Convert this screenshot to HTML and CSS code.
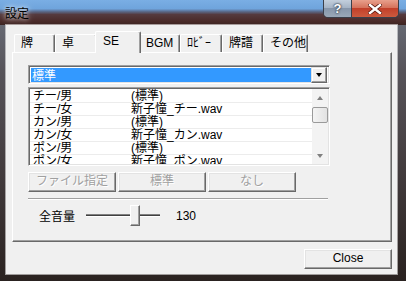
FILE: index.html
```html
<!DOCTYPE html>
<html lang="ja">
<head>
  <meta charset="UTF-8">
  <title>設定</title>
  <link rel="stylesheet" href="styles.css">
</head>
<body>
  <div class="window">
    <div class="titlebar">
      <span class="title">設定</span>
      <div class="caption">
        <div class="cap help">?</div>
        <div class="cap close">
          <svg width="14" height="10" viewBox="0 0 14 10">
            <path d="M2 1 L12 9 M12 1 L2 9" stroke="#5a1a10" stroke-width="4" stroke-linecap="square"/>
            <path d="M2 1 L12 9 M12 1 L2 9" stroke="#fff" stroke-width="2.4" stroke-linecap="square"/>
          </svg>
        </div>
      </div>
    </div>

    <div class="client">
      <div class="tabs">
        <div class="tab w41">牌</div>
        <div class="tab">卓</div>
        <div class="tab active">SE</div>
        <div class="tab w41">BGM</div>
        <div class="tab">ﾛﾋﾞｰ</div>
        <div class="tab w41">牌譜</div>
        <div class="tab w45">その他</div>
      </div>

      <div class="panel">
        <div class="combo">
          <div class="combo-value">標準</div>
          <div class="combo-arrow"><span class="tri-down"></span></div>
        </div>

        <div class="list">
          <div class="rows">
            <div class="row"><span class="c1">チー/男</span><span>(標準)</span></div>
            <div class="row"><span class="c1">チー/女</span><span>新子憧_チー.wav</span></div>
            <div class="row"><span class="c1">カン/男</span><span>(標準)</span></div>
            <div class="row"><span class="c1">カン/女</span><span>新子憧_カン.wav</span></div>
            <div class="row"><span class="c1">ポン/男</span><span>(標準)</span></div>
            <div class="row"><span class="c1">ポン/女</span><span>新子憧_ポン.wav</span></div>
          </div>
          <div class="vscroll">
            <div class="sb-btn"><span class="sb-up"></span></div>
            <div class="sb-thumb"></div>
            <div class="sb-fill"></div>
            <div class="sb-btn"><span class="sb-down"></span></div>
          </div>
        </div>

        <div class="btnrow">
          <div class="btn disabled">ファイル指定</div>
          <div class="btn disabled">標準</div>
          <div class="btn disabled">なし</div>
        </div>

        <div class="sep"></div>

        <div class="volume">
          <span class="vol-label">全音量</span>
          <div class="slider">
            <div class="track"></div>
            <div class="thumb"></div>
          </div>
          <span class="vol-value">130</span>
        </div>
      </div>

      <div class="footer">
        <div class="btn">Close</div>
      </div>
    </div>
  </div>
</body>
</html>
```

FILE: styles.css
```css
body {
  margin: 0;
  font-family: "Liberation Sans", "Noto Sans CJK JP", sans-serif;
  font-size: 12px;
  color: #000;
}
.window {
  width: 406px;
  height: 281px;
  padding: 0 9px 7px 6px;
  box-sizing: border-box;
  background-color: #433c3e;
  background-image: linear-gradient(to bottom, #6e7480 0, #57545a 25%, #433c3e 60%, #2a2220 100%);
  overflow: hidden;
}

/* title bar */
.titlebar {
  height: 25px;
  margin: 0 -9px 0 -6px;
  padding-left: 5px;
  display: flex;
  align-items: flex-start;
  justify-content: space-between;
  background-color: #6fa3dc;
  background-image: linear-gradient(to bottom, #7aaee4 0%, #6fa4dc 35%, #5b6f92 45%, #553a3e 58%, #4a2a28 85%, #3c2422 100%);
}
.title {
  margin-top: 5px;
  font-family: "Noto Sans CJK JP", sans-serif;
  font-size: 12px;
  line-height: 15px;
  text-shadow: 0 0 4px rgba(255,255,255,.9), 0 0 8px rgba(255,255,255,.6);
}
.caption {
  display: flex;
  margin-right: 7px;
  border: 1px solid #3a3f4a;
  border-top: 0;
  border-radius: 0 0 5px 5px;
  overflow: hidden;
  box-shadow: inset 0 0 0 1px rgba(255,255,255,.45);
}
.cap {
  height: 17px;
  display: flex;
  align-items: center;
  justify-content: center;
}
.help {
  width: 27px;
  border-right: 1px solid #3a3f4a;
  background: linear-gradient(to bottom, #c3cfdd 0, #a6b4c5 45%, #8796aa 50%, #9aa8b8 100%);
  color: #fff;
  font-weight: bold;
  font-size: 13px;
  text-shadow: 0 0 2px #2a3340, 0 0 2px #2a3340;
}
.close {
  width: 46px;
  background: linear-gradient(to bottom, #e8a08c 0, #d5735c 45%, #c2402a 50%, #cc5a3e 100%);
}

/* client area */
.client {
  height: 249px;
  background: #f0f0f0;
  box-shadow: 0 0 0 1px rgba(255,255,255,.55);
  padding: 0 5px 0 6px;
  box-sizing: border-box;
}
.tabs {
  height: 27px;
  padding-left: 2px;
  display: flex;
  align-items: flex-end;
}
.tab {
  width: 42px;
  height: 18px;
  box-sizing: border-box;
  padding-left: 6px;
  line-height: 17px;
  white-space: nowrap;
  overflow: hidden;
  background: #f0f0f0;
  border-top: 1px solid #fff;
  border-left: 1px solid #fff;
  border-right: 1px solid #696969;
  border-radius: 2px 2px 0 0;
  box-shadow: inset -1px 0 #a0a0a0;
}
.tab.w41 { width: 41px; }
.tab.w45 { width: 45px; }
.tab.active {
  width: 46px;
  height: 22px;
  margin: 0 -2px -1px;
  padding-left: 7px;
  line-height: 19px;
  position: relative;
  z-index: 2;
}

.panel {
  height: 190px;
  box-sizing: border-box;
  padding: 12px 0 0 15px;
  border-top: 1px solid #fff;
  border-left: 1px solid #fff;
  border-right: 1px solid #696969;
  border-bottom: 1px solid #696969;
  box-shadow: inset -1px -1px #a0a0a0;
}

/* combo box */
.combo {
  width: 302px;
  height: 19px;
  box-sizing: border-box;
  display: flex;
  border-top: 1px solid #a0a0a0;
  border-left: 1px solid #a0a0a0;
  border-right: 1px solid #fff;
  border-bottom: 1px solid #fff;
  box-shadow: inset 1px 1px #696969, inset -1px -1px #e3e3e3;
  padding: 2px 2px 1px 2px;
  background: #fff;
}
.combo-value {
  flex: 1;
  background: #3399ff;
  color: #fff;
  line-height: 14px;
  padding-left: 1px;
  font-family: "Noto Sans CJK JP", sans-serif;
}
.combo-arrow {
  width: 16px;
  margin-top: -1px;
  margin-bottom: -1px;
  box-sizing: border-box;
  background: #f0f0f0;
  border-top: 1px solid #e3e3e3;
  border-left: 1px solid #e3e3e3;
  border-right: 1px solid #696969;
  border-bottom: 1px solid #696969;
  box-shadow: inset -1px -1px #a0a0a0, inset 1px 1px #fff;
  display: flex;
  align-items: center;
  justify-content: center;
}
.tri-down {
  border-left: 3.5px solid transparent;
  border-right: 3.5px solid transparent;
  border-top: 4px solid #000;
}

/* list */
.list {
  width: 302px;
  height: 79px;
  margin-top: 3px;
  box-sizing: border-box;
  display: flex;
  background: #fff;
  border-top: 1px solid #a0a0a0;
  border-left: 1px solid #a0a0a0;
  border-right: 1px solid #fff;
  border-bottom: 1px solid #fff;
  box-shadow: inset 1px 1px #696969, inset -1px -1px #e3e3e3;
  padding: 1px;
  overflow: hidden;
}
.rows {
  flex: 1;
  padding-top: 1px;
  overflow: hidden;
}
.row {
  height: 13px;
  box-sizing: border-box;
  display: flex;
  line-height: 12px;
  border-bottom: 1px solid #ececec;
  white-space: nowrap;
}
.c1 {
  width: 98px;
  padding-left: 3px;
}
.vscroll {
  width: 16px;
  display: flex;
  flex-direction: column;
  background: #f3f3f3;
}
.sb-btn {
  height: 17px;
  display: flex;
  align-items: center;
  justify-content: center;
}
.sb-up {
  border-left: 3.5px solid transparent;
  border-right: 3.5px solid transparent;
  border-bottom: 4px solid #808080;
}
.sb-down {
  border-left: 3.5px solid transparent;
  border-right: 3.5px solid transparent;
  border-top: 4px solid #808080;
}
.sb-thumb {
  height: 16px;
  margin-top: 1px;
  box-sizing: border-box;
  border: 1px solid #9a9a9a;
  border-radius: 2px;
  background: linear-gradient(to right, #f4f4f4, #e2e2e2);
}
.sb-fill { flex: 1; }

/* buttons */
.btnrow {
  display: flex;
  gap: 2px;
  margin-top: 6px;
}
.btn {
  width: 88px;
  height: 20px;
  box-sizing: border-box;
  text-align: center;
  line-height: 17px;
  background: #f0f0f0;
  border-top: 1px solid #fff;
  border-left: 1px solid #fff;
  border-right: 1px solid #696969;
  border-bottom: 1px solid #696969;
  box-shadow: inset -1px -1px #a0a0a0, inset 1px 1px #e3e3e3;
}
.btn.disabled {
  color: #a0a0a0;
  text-shadow: 1px 1px #fff;
}

.sep {
  width: 300px;
  height: 0;
  margin-top: 6px;
  border-top: 1px solid #a0a0a0;
  border-bottom: 1px solid #fff;
}

/* volume */
.volume {
  display: flex;
  align-items: center;
  height: 21px;
  margin-top: 5px;
}
.vol-label {
  margin-left: 11px;
  width: 47px;
  font-family: "Noto Sans CJK JP", sans-serif;
}
.slider {
  position: relative;
  width: 74px;
  height: 21px;
}
.track {
  margin-top: 9px;
  height: 1px;
  border-top: 1px solid #808080;
  border-bottom: 1px solid #fff;
  background: #404040;
}
.thumb {
  position: absolute;
  left: 44px;
  top: 0;
  width: 10px;
  height: 21px;
  box-sizing: border-box;
  background: #f0f0f0;
  border-top: 1px solid #fff;
  border-left: 1px solid #fff;
  border-right: 1px solid #696969;
  border-bottom: 1px solid #696969;
  box-shadow: inset -1px -1px #a0a0a0;
}
.vol-value {
  margin-left: 16px;
}

.footer {
  display: flex;
  justify-content: flex-end;
  padding-top: 7px;
}
```
